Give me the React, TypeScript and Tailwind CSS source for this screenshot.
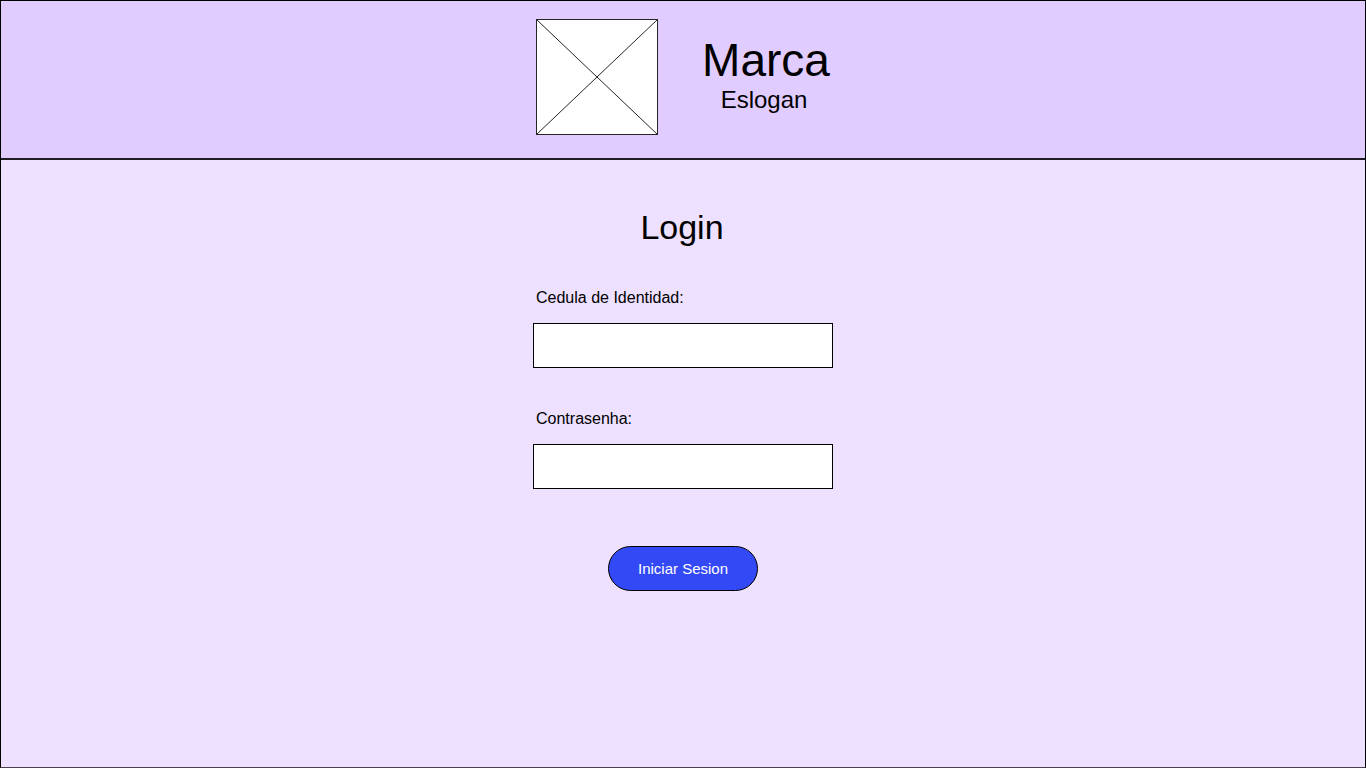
export default function App() {
  return (
    <div className="flex min-h-screen flex-col border border-black border-b-[#47434d] bg-[#eee0ff] font-['Liberation_Sans',Arial,sans-serif] text-black">
      <header className="flex justify-center gap-11 border-b-2 border-[#1f1b24] bg-[#e1ccff] pt-[18px] pb-[23px]">
        <svg width="122" height="116" viewBox="0 0 122 116" role="img" aria-label="Logo" fill="white" stroke="#262626">
          <rect x="0.5" y="0.5" width="121" height="115" />
          <path d="M0.5 0.5 L121.5 115.5 M121.5 0.5 L0.5 115.5" />
        </svg>
        <div className="flex flex-col items-center pt-[15px] text-center">
          <h1 className="text-[46px] leading-[52px]">Marca</h1>
          <p className="pr-1 text-2xl leading-7">Eslogan</p>
        </div>
      </header>
      <main className="flex flex-1 flex-col items-center pt-[47px]">
        <h2 className="pr-0.5 text-[34px] leading-10">Login</h2>
        <form className="flex w-[300px] flex-col pt-[39px]">
          <label htmlFor="cedula" className="pl-[3px] text-base leading-6">
            Cedula de Identidad:
          </label>
          <input id="cedula" type="text" className="mt-[13px] h-[45px] border border-black bg-white px-3" />
          <label htmlFor="contrasenha" className="mt-[39px] pl-[3px] text-base leading-6">
            Contrasenha:
          </label>
          <input id="contrasenha" type="password" className="mt-[13px] h-[45px] border border-black bg-white px-3" />
          <button type="button" className="mt-[57px] h-[45px] w-[150px] self-center rounded-full border border-black bg-[#3349f5] pt-0.5 text-[15px] text-white">
            Iniciar Sesion
          </button>
        </form>
      </main>
    </div>
  );
}
